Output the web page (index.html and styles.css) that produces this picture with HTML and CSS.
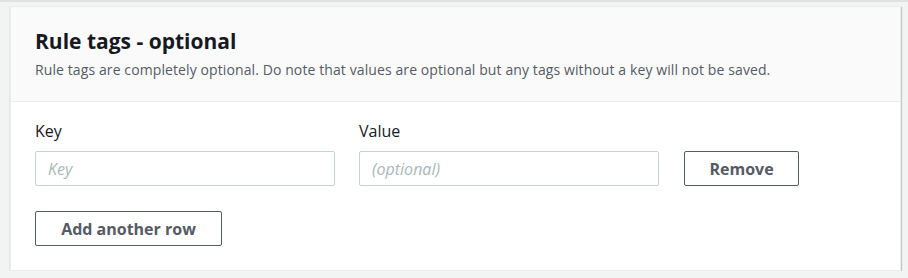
FILE: index.html
```html
<!DOCTYPE html>
<html lang="en">
  <head>
    <meta charset="UTF-8" />
    <meta name="viewport" content="width=device-width, initial-scale=1.0" />
    <title>Rule tags</title>
    <link rel="stylesheet" href="styles.css">
  </head>
  <body>
    <div class="panel">
      <div class="panel-header">
        <h2>Rule tags - optional</h2>
        <p class="description">
          Rule tags are completely optional. Do note that values are optional but any tags without a key will not be saved.
        </p>
      </div>
      <div class="panel-body">
        <div class="tag-row">
          <div class="field">
            <label for="tagKey">Key</label>
            <input type="text" id="tagKey" class="text-input" placeholder="Key" />
          </div>
          <div class="field">
            <label for="tagValue">Value</label>
            <input type="text" id="tagValue" class="text-input" placeholder="(optional)" />
          </div>
          <button class="btn btn-remove">Remove</button>
        </div>
        <button class="btn btn-add">Add another row</button>
      </div>
    </div>
  </body>
</html>
```

FILE: styles.css
```css
body {
  font-family: "Open Sans", "Noto Sans", sans-serif;
  margin: 0;
  padding: 4px 7px 0 10px;
  background-color: #f2f3f3;
  border-top: 2px solid #dfe2e2;
  color: #16191f;
}

.panel {
  background: #fff;
  border: 1px solid #eaeded;
  box-shadow: 0 1px 1px 0 rgba(0, 28, 36, 0.3), 1px 1px 1px 0 rgba(0, 28, 36, 0.15);
  height: 265px;
  box-sizing: border-box;
}

.panel-header {
  background-color: #fafafa;
  border-bottom: 1px solid #eaeded;
  padding: 21px 24px 0;
  height: 95px;
  box-sizing: border-box;
}

.panel-header h2 {
  font-size: 21px;
  font-weight: 700;
  line-height: 26px;
  margin: 0;
}

.description {
  font-size: 14px;
  line-height: 20px;
  letter-spacing: 0.1px;
  color: #545b64;
  margin: 6px 0 0;
}

.panel-body {
  padding: 18px 24px 0;
}

.tag-row {
  display: flex;
  align-items: flex-end;
  gap: 24px;
}

.field {
  display: flex;
  flex-direction: column;
  width: 300px;
}

.field label {
  font-size: 16px;
  line-height: 22px;
  margin-bottom: 9px;
}

.text-input {
  height: 35px;
  box-sizing: border-box;
  border: 1px solid #c9d1d2;
  border-radius: 2px;
  padding: 0 12px;
  font-family: inherit;
  font-size: 16px;
  color: #16191f;
}

.text-input::placeholder {
  color: #aab7b8;
  font-style: italic;
}

.btn {
  font-family: inherit;
  font-size: 16px;
  font-weight: 700;
  color: #545b64;
  background: #fff;
  border: 1px solid #545b64;
  border-radius: 2px;
  height: 35px;
  box-sizing: border-box;
  cursor: pointer;
}

.btn-remove {
  width: 115px;
  margin-left: 1px;
}

.btn-add {
  width: 187px;
  margin-top: 25px;
}
```
